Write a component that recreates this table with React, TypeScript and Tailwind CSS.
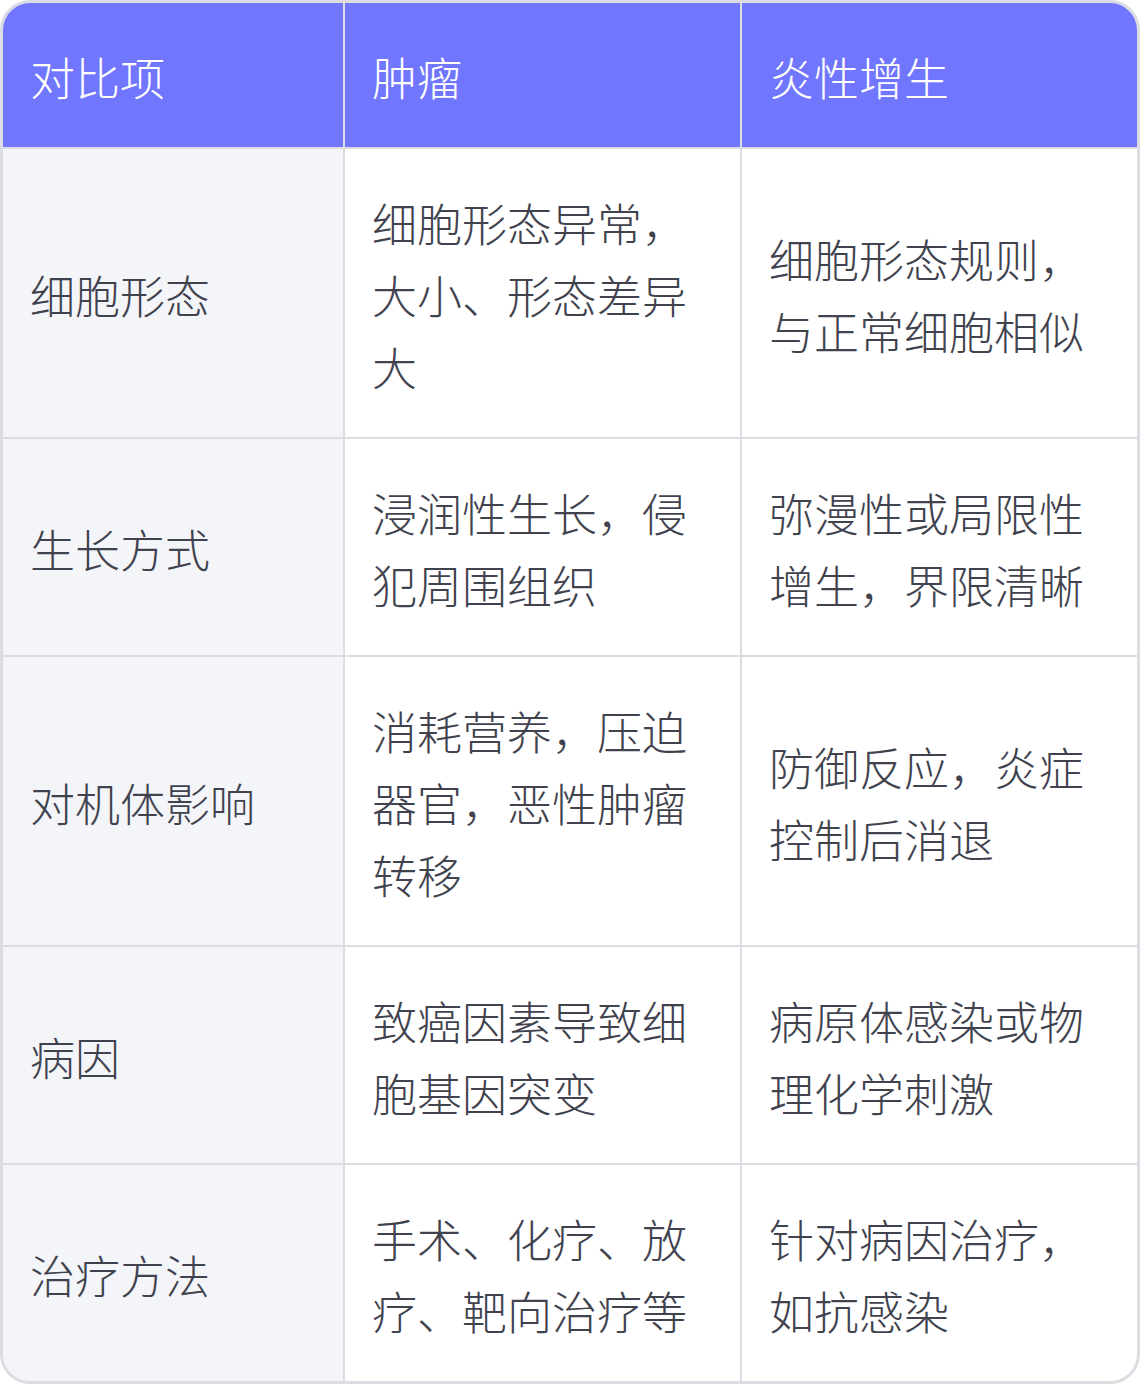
import React from 'react';

const HEADERS = ['对比项', '肿瘤', '炎性增生'];

const ROWS: [string, string, string][] = [
  ['细胞形态', '细胞形态异常，大小、形态差异大', '细胞形态规则，与正常细胞相似'],
  ['生长方式', '浸润性生长，侵犯周围组织', '弥漫性或局限性增生，界限清晰'],
  ['对机体影响', '消耗营养，压迫器官，恶性肿瘤转移', '防御反应，炎症控制后消退'],
  ['病因', '致癌因素导致细胞基因突变', '病原体感染或物理化学刺激'],
  ['治疗方法', '手术、化疗、放疗、靶向治疗等', '针对病因治疗，如抗感染'],
];

const cell = 'flex items-center pl-[27px] pr-[29px] pt-[38px] pb-[34px] text-[45px] leading-[72px] font-light';

export default function App() {
  return (
    <div
      className="w-[1140px] bg-white"
      style={{ fontFamily: '"Noto Sans CJK SC", "Noto Sans", sans-serif' }}
    >
      <div className="overflow-hidden rounded-[30px] border-[3px] border-[#dcdde2]">
        <div className="grid grid-cols-[340px_395px_395px] gap-[2px] bg-[#dcdde2]">
          {HEADERS.map((h) => (
            <div key={h} className={`${cell} bg-[#7176ff] text-white`}>
              {h}
            </div>
          ))}
          {ROWS.map(([label, tumor, inflam]) => (
            <React.Fragment key={label}>
              <div className={`${cell} bg-[#f4f5f9] text-[#40424e]`}>{label}</div>
              <div className={`${cell} bg-white text-[#40424e]`}>{tumor}</div>
              <div className={`${cell} bg-white text-[#40424e]`}>{inflam}</div>
            </React.Fragment>
          ))}
        </div>
      </div>
    </div>
  );
}
